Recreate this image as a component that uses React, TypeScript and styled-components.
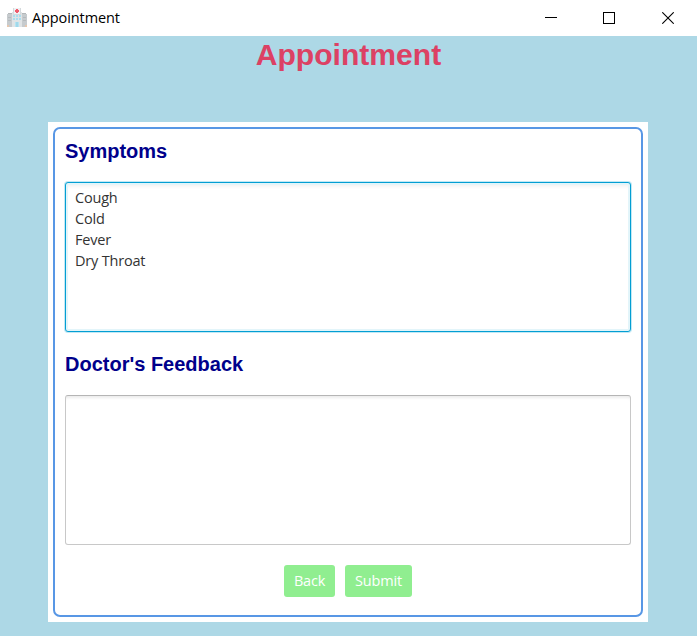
import React from "react";
import styled, { createGlobalStyle } from "styled-components";

const GlobalStyle = createGlobalStyle`
  * { box-sizing: border-box; }
  body { margin: 0; overflow: hidden; }
`;

const Window = styled.div`
  display: flex;
  flex-direction: column;
  width: 697px;
  height: 636px;
  background: #add8e6;
  font-family: "Open Sans", "Noto Sans", sans-serif;
`;

const TitleBar = styled.header`
  display: flex;
  align-items: center;
  flex: none;
  height: 36px;
  padding-left: 7px;
  background: #fff;
`;

const WindowTitle = styled.span`
  flex: 1;
  margin-left: 5px;
  color: #000;
  font-size: 14.5px;
  line-height: 20px;
  letter-spacing: -0.1px;
`;

const WindowControl = styled.button`
  display: flex;
  align-items: center;
  justify-content: center;
  width: 58.5px;
  height: 34px;
  padding: 0;
  border: 0;
  background: none;
`;

const Heading = styled.h1`
  margin: 0;
  height: 86px;
  color: #dc4164;
  font: bold 30.1px/37px "Liberation Sans", Arial, sans-serif;
  text-align: center;
`;

const Card = styled.main`
  width: 600px;
  height: 500px;
  margin-left: 48px;
  padding: 5px;
  background: #fff;
`;

const Form = styled.form`
  display: flex;
  flex-direction: column;
  height: 490px;
  padding: 10px;
  border: 2px solid #5897e5;
  border-radius: 7px;
`;

const Label = styled.label<{ $gap: number }>`
  margin-top: ${(p) => p.$gap}px;
  height: 24px;
  color: #00008b;
  font: bold 20px/24px "Liberation Sans", Arial, sans-serif;
`;

const TextArea = styled.textarea<{ $active?: boolean }>`
  display: block;
  flex: none;
  width: 566px;
  height: 150px;
  margin: 19px 0 0;
  padding: 4px 9px;
  resize: none;
  outline: none;
  border: 1px solid ${(p) => (p.$active ? "#039ed3" : "#c8c8c8")};
  border-top-color: ${(p) => (p.$active ? "#039ed3" : "#b5b5b5")};
  border-radius: 3px;
  box-shadow: ${(p) =>
    p.$active
      ? "0 0 0 1px #c2e8f4, inset 0 0 0 2px #e3f5fa, inset 0 5px 4px -2px #eee"
      : "inset 0 4px 3px -2px #ececec"};
  background: #fff;
  color: #333;
  font: 14.5px/21px "Open Sans", "Noto Sans", sans-serif;
  letter-spacing: -0.2px;
`;

const Actions = styled.div`
  display: flex;
  justify-content: center;
  gap: 10px;
  margin-top: 20px;
`;

const Button = styled.button<{ $width: number }>`
  width: ${(p) => p.$width}px;
  height: 32px;
  padding: 0;
  border: 0;
  border-radius: 3px;
  background: #90ee90;
  color: #fff;
  font: 14.5px/32px "Open Sans", "Noto Sans", sans-serif;
  letter-spacing: -0.2px;
`;

const HospitalIcon = () => (
  <svg width="20" height="20" viewBox="0 0 20 20" aria-hidden="true">
    <path fill="#c6cbce" d="M0 6h6v13H0zM14 6h6v13h-6z" />
    <path fill="#b4b8ba" d="M1 5h5v1H1zM14 5h5v1h-5z" />
    <path fill="#e0e4e6" d="M5 4h10v15H5z" />
    <path fill="#d4dadd" d="M6 0h8v7H6z" />
    <path fill="#eff1f3" d="M7 0h6v6H7z" />
    <path fill="#ef5b6c" d="M9 1h2v1h1v2h-1v1H9V4H8V2h1z" />
    <path fill="#a9deef" d="M6 7h2v2H6zM9 7h2v2H9zM12 7h2v2h-2zM6 10h2v2H6zM9 10h2v2H9zM12 10h2v2h-2z" />
    <path fill="#b5e4f2" d="M8 14h4v5H8z" />
    <path fill="#8dcce1" d="M9.5 14h1v5h-1z" />
    <path fill="#b5babd" d="M1 9h3v1H1zM1 12h3v1H1zM16 9h3v1h-3zM16 12h3v1h-3z" />
    <path fill="#e6c7ae" d="M0 17h2v2H0zM18 17h2v2h-2z" />
  </svg>
);

const MinimizeIcon = () => (
  <svg width="12" height="12" viewBox="0 0 12 12" shapeRendering="crispEdges">
    <path fill="#000" d="M0 5h12v1H0z" />
  </svg>
);

const MaximizeIcon = () => (
  <svg width="12" height="12" viewBox="0 0 12 12" shapeRendering="crispEdges">
    <rect x=".5" y=".5" width="11" height="11" fill="none" stroke="#000" />
  </svg>
);

const CloseIcon = () => (
  <svg width="12" height="12" viewBox="0 0 12 12">
    <path d="M.3.3l11.4 11.4M11.7.3L.3 11.7" stroke="#000" strokeWidth="1.1" />
  </svg>
);

export default function App() {
  return (
    <Window>
      <GlobalStyle />
      <TitleBar>
        <HospitalIcon />
        <WindowTitle>Appointment</WindowTitle>
        <WindowControl aria-label="Minimize"><MinimizeIcon /></WindowControl>
        <WindowControl aria-label="Maximize"><MaximizeIcon /></WindowControl>
        <WindowControl aria-label="Close"><CloseIcon /></WindowControl>
      </TitleBar>
      <Heading>Appointment</Heading>
      <Card>
        <Form>
          <Label $gap={0} htmlFor="symptoms">Symptoms</Label>
          <TextArea id="symptoms" $active defaultValue={"Cough\nCold\nFever\nDry Throat"} />
          <Label $gap={20} htmlFor="feedback">Doctor's Feedback</Label>
          <TextArea id="feedback" />
          <Actions>
            <Button type="button" $width={51}>Back</Button>
            <Button type="button" $width={67}>Submit</Button>
          </Actions>
        </Form>
      </Card>
    </Window>
  );
}
